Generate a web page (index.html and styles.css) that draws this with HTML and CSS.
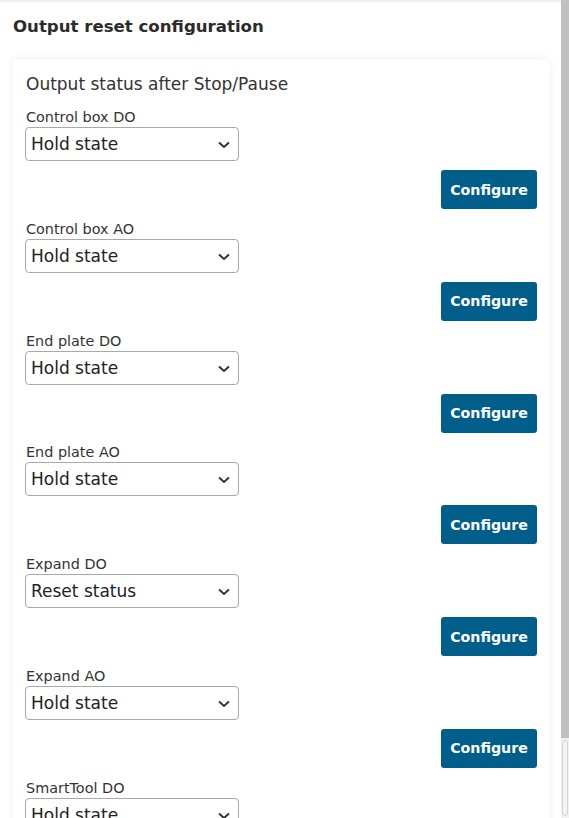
FILE: index.html
```html
<!DOCTYPE html>
<html lang="en">
<head>
<meta charset="utf-8">
<title>Output reset configuration</title>
<link rel="stylesheet" href="styles.css">
</head>
<body>
<div class="page">
  <main class="content">
    <h1 class="heading">Output reset configuration</h1>
    <section class="card">
      <h2 class="card-title">Output status after Stop/Pause</h2>

      <div class="group">
        <label class="label">Control box DO</label>
        <div class="select"><span class="select-value">Hold state</span><svg class="chev" viewBox="0 0 12 8" width="12" height="8"><path d="M1 1.5 L6 6 L11 1.5" fill="none" stroke="#333" stroke-width="2"/></svg></div>
        <div class="actions"><button class="btn">Configure</button></div>
      </div>

      <div class="group">
        <label class="label">Control box AO</label>
        <div class="select"><span class="select-value">Hold state</span><svg class="chev" viewBox="0 0 12 8" width="12" height="8"><path d="M1 1.5 L6 6 L11 1.5" fill="none" stroke="#333" stroke-width="2"/></svg></div>
        <div class="actions"><button class="btn">Configure</button></div>
      </div>

      <div class="group">
        <label class="label">End plate DO</label>
        <div class="select"><span class="select-value">Hold state</span><svg class="chev" viewBox="0 0 12 8" width="12" height="8"><path d="M1 1.5 L6 6 L11 1.5" fill="none" stroke="#333" stroke-width="2"/></svg></div>
        <div class="actions"><button class="btn">Configure</button></div>
      </div>

      <div class="group">
        <label class="label">End plate AO</label>
        <div class="select"><span class="select-value">Hold state</span><svg class="chev" viewBox="0 0 12 8" width="12" height="8"><path d="M1 1.5 L6 6 L11 1.5" fill="none" stroke="#333" stroke-width="2"/></svg></div>
        <div class="actions"><button class="btn">Configure</button></div>
      </div>

      <div class="group">
        <label class="label">Expand DO</label>
        <div class="select"><span class="select-value">Reset status</span><svg class="chev" viewBox="0 0 12 8" width="12" height="8"><path d="M1 1.5 L6 6 L11 1.5" fill="none" stroke="#333" stroke-width="2"/></svg></div>
        <div class="actions"><button class="btn">Configure</button></div>
      </div>

      <div class="group">
        <label class="label">Expand AO</label>
        <div class="select"><span class="select-value">Hold state</span><svg class="chev" viewBox="0 0 12 8" width="12" height="8"><path d="M1 1.5 L6 6 L11 1.5" fill="none" stroke="#333" stroke-width="2"/></svg></div>
        <div class="actions"><button class="btn">Configure</button></div>
      </div>

      <div class="group">
        <label class="label">SmartTool DO</label>
        <div class="select"><span class="select-value">Hold state</span><svg class="chev" viewBox="0 0 12 8" width="12" height="8"><path d="M1 1.5 L6 6 L11 1.5" fill="none" stroke="#333" stroke-width="2"/></svg></div>
        <div class="actions"><button class="btn">Configure</button></div>
      </div>

      <div class="group">
        <label class="label">SmartTool AO</label>
        <div class="select"><span class="select-value">Hold state</span><svg class="chev" viewBox="0 0 12 8" width="12" height="8"><path d="M1 1.5 L6 6 L11 1.5" fill="none" stroke="#333" stroke-width="2"/></svg></div>
        <div class="actions"><button class="btn">Configure</button></div>
      </div>
    </section>
  </main>
  <div class="scrollbar">
    <div class="thumb"></div>
    <div class="track"></div>
  </div>
</div>
</body>
</html>
```

FILE: styles.css
```css
html, body {
  margin: 0;
  padding: 0;
  height: 818px;
  overflow: hidden;
  background: #ffffff;
}

body {
  font-family: "DejaVu Sans", Verdana, sans-serif;
  color: #333333;
}

.page {
  display: flex;
  height: 818px;
}

.content {
  flex: 1;
  min-width: 0;
  padding: 0 12px 0 13px;
  border-top: 2px solid #f0f0f0;
  overflow: hidden;
}

.heading {
  margin: 0;
  padding-top: 15px;
  font-size: 16.6px;
  line-height: 19px;
  font-weight: bold;
  color: #2b2b2b;
}

.card {
  margin-top: 23px;
  background: #ffffff;
  border-radius: 4px;
  box-shadow: 0 0 10px rgba(0, 0, 0, 0.07);
  padding: 15px 12px 20px 12px;
}

.card-title {
  margin: 0 0 13px 1px;
  font-size: 17px;
  line-height: 21px;
  font-weight: normal;
  color: #333333;
}

.group {
  display: flex;
  flex-direction: column;
}

.label {
  font-size: 14.4px;
  line-height: 19px;
  margin: 0 0 0 1px;
  color: #333333;
}

.select {
  position: relative;
  box-sizing: border-box;
  width: 214px;
  height: 34px;
  border: 1px solid #a9a9a9;
  border-radius: 4px;
  display: flex;
  align-items: center;
  padding-left: 5px;
  background: #ffffff;
}

.select-value {
  font-size: 17px;
  color: #222222;
}

.chev {
  position: absolute;
  right: 8px;
  top: 13px;
}

.actions {
  display: flex;
  justify-content: flex-end;
  margin-top: 9px;
  margin-bottom: 10.8px;
}

.btn {
  width: 96px;
  height: 39px;
  border: none;
  border-radius: 3px;
  background: #005e8b;
  color: #ffffff;
  font-family: "DejaVu Sans", Verdana, sans-serif;
  font-size: 14.2px;
  font-weight: bold;
  padding: 0;
}

.scrollbar {
  width: 8px;
  display: flex;
  flex-direction: column;
  background: #f1f1f1;
}

.thumb {
  height: 738px;
  background: #c1c1c1;
}

.track {
  flex: 1;
  margin: 2px 1px 2px 1px;
  border: 1px solid #d6d6d6;
  border-radius: 3px;
  background: #f4f4f4;
}
```
